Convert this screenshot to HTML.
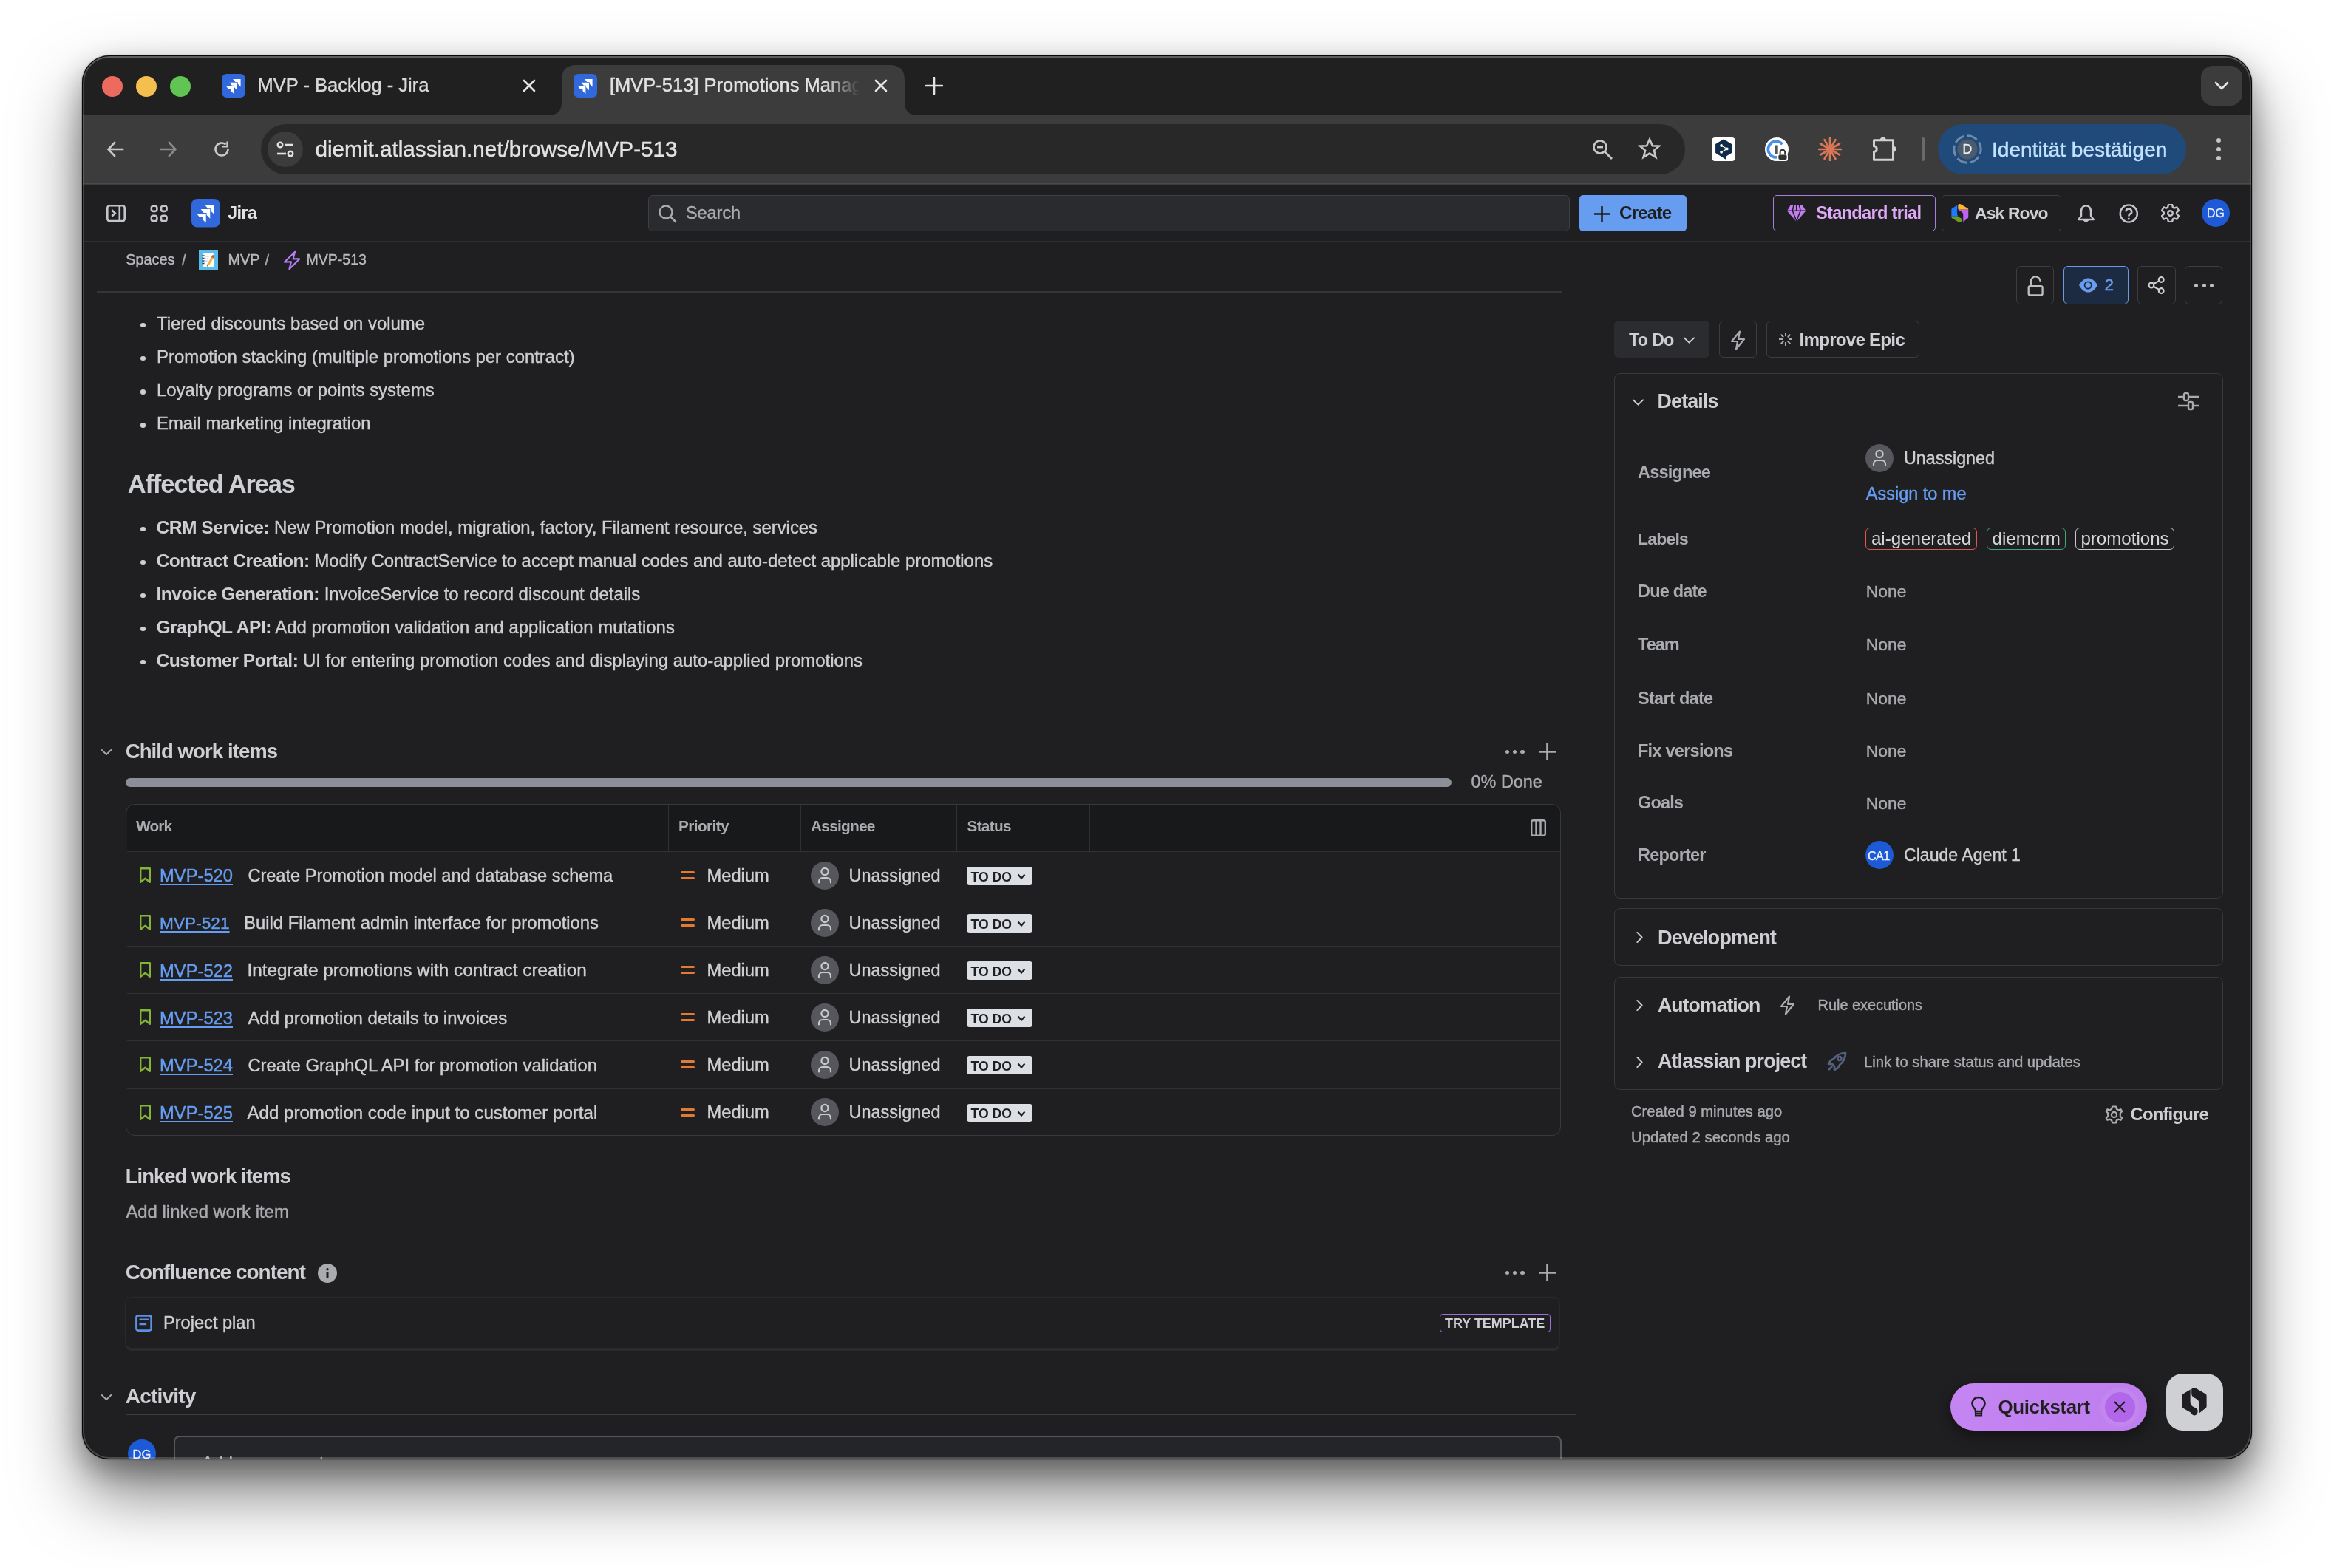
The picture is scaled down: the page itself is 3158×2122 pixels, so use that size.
<!DOCTYPE html>
<html><head><meta charset="utf-8"><style>
html,body{margin:0;padding:0;background:#fff;width:3158px;height:2122px;overflow:hidden;}
body{font-family:"Liberation Sans", sans-serif;}
#shadow{position:absolute;left:111px;top:75px;width:2936px;height:1900px;border-radius:37px;box-shadow:0 46px 90px rgba(0,0,0,0.5), 0 16px 36px rgba(0,0,0,0.3), 0 0 2px rgba(0,0,0,0.6);}
#win{position:absolute;left:111px;top:75px;width:2936px;height:1900px;border-radius:37px;overflow:hidden;background:#1F1F21;will-change:transform;}
#edge{position:absolute;left:111px;top:75px;width:2936px;height:1900px;border-radius:37px;box-shadow:inset 0 0 0 1.1px rgba(0,0,0,0.92), inset 0 0 0 3px rgba(255,255,255,0.2), inset 0 3px 0 rgba(255,255,255,0.1);pointer-events:none;}
</style></head><body>
<div id="shadow"></div>
<div id="win">
<div style="position:absolute;left:0.0px;top:0.0px;width:2936.0px;height:81.0px;background:#202020;"></div>
<div style="position:absolute;left:27.0px;top:28.0px;width:28.0px;height:28.0px;background:#EC6A5E;border-radius:50%;"></div>
<div style="position:absolute;left:73.0px;top:28.0px;width:28.0px;height:28.0px;background:#F4BF4F;border-radius:50%;"></div>
<div style="position:absolute;left:119.0px;top:28.0px;width:28.0px;height:28.0px;background:#61C554;border-radius:50%;"></div>
<svg style="position:absolute;left:189.0px;top:25.0px;" width="32" height="32" viewBox="0 0 32 32" fill="none"><rect width="32" height="32" rx="6.5" fill="#3168DC"/><path d="M15.10 6.90 h10.5 v10.5 l-3.9 -3.9 v-2.5 h-3.3 Z" fill="#fff"/><path d="M10.50 11.70 h10.5 v10.5 l-3.9 -3.9 v-2.5 h-3.3 Z" fill="#fff"/><path d="M5.90 16.60 h10.5 v10.5 l-3.9 -3.9 v-2.5 h-3.3 Z" fill="#fff"/></svg>
<div style="position:absolute;left:237.5px;top:28.4px;font-size:25.5px;line-height:25.5px;color:#D9D9D9;-webkit-text-stroke:0.4px currentColor;white-space:nowrap;">MVP - Backlog - Jira</div>
<svg style="position:absolute;left:596.0px;top:32.0px;" width="18" height="18" viewBox="0 0 18 18" fill="none"><path d="M2 2 L16 16 M16 2 L2 16" stroke="#E3E3E3" stroke-width="2.6" stroke-linecap="round"/></svg>
<svg style="position:absolute;left:631px;top:13px" width="500" height="68" viewBox="0 0 500 68"><path d="M0 68 Q18 68 18 50 L18 20 Q18 0 38 0 L462 0 Q482 0 482 20 L482 50 Q482 68 500 68 Z" fill="#3C3C3C"/></svg>
<svg style="position:absolute;left:665.0px;top:25.0px;" width="32" height="32" viewBox="0 0 32 32" fill="none"><rect width="32" height="32" rx="6.5" fill="#3168DC"/><path d="M15.10 6.90 h10.5 v10.5 l-3.9 -3.9 v-2.5 h-3.3 Z" fill="#fff"/><path d="M10.50 11.70 h10.5 v10.5 l-3.9 -3.9 v-2.5 h-3.3 Z" fill="#fff"/><path d="M5.90 16.60 h10.5 v10.5 l-3.9 -3.9 v-2.5 h-3.3 Z" fill="#fff"/></svg>
<div style="position:absolute;left:714.0px;top:28.4px;font-size:25.5px;line-height:25.5px;color:#E3E3E3;-webkit-text-stroke:0.4px currentColor;white-space:nowrap;width:340px;overflow:hidden;-webkit-mask-image:linear-gradient(90deg,#000 290px,transparent 338px);">[MVP-513] Promotions Manag</div>
<svg style="position:absolute;left:1072.0px;top:32.0px;" width="18" height="18" viewBox="0 0 18 18" fill="none"><path d="M2 2 L16 16 M16 2 L2 16" stroke="#E3E3E3" stroke-width="2.6" stroke-linecap="round"/></svg>
<svg style="position:absolute;left:1141.0px;top:29.0px;" width="24" height="24" viewBox="0 0 24 24" fill="none"><path d="M12 1 V23 M1 12 H23" stroke="#E3E3E3" stroke-width="2.6" stroke-linecap="round"/></svg>
<div style="position:absolute;left:2867.0px;top:14.0px;width:56.0px;height:54.0px;background:#3C3C3C;border-radius:16px;"></div>
<svg style="position:absolute;left:2885.0px;top:34.0px;" width="20" height="14" viewBox="0 0 20 14" fill="none"><path d="M2 3 L10 11 L18 3" stroke="#E3E3E3" stroke-width="2.6" fill="none" stroke-linecap="round" stroke-linejoin="round"/></svg>
<div style="position:absolute;left:0.0px;top:81.0px;width:2936.0px;height:93.5px;background:#3C3C3C;"></div>
<div style="position:absolute;left:0.0px;top:172.8px;width:2936.0px;height:1.7px;background:#4A4A4A;"></div>
<svg style="position:absolute;left:33.0px;top:115.0px;" width="24" height="24" viewBox="0 0 24 24" fill="none"><path d="M22 12 H3 M11 3 L2.5 12 L11 21" stroke="#C7C7C7" stroke-width="2.6" fill="none" stroke-linecap="square"/></svg>
<svg style="position:absolute;left:105.0px;top:115.0px;" width="24" height="24" viewBox="0 0 24 24" fill="none"><path d="M2 12 H21 M13 3 L21.5 12 L13 21" stroke="#8A8A8A" stroke-width="2.6" fill="none" stroke-linecap="square"/></svg>
<svg style="position:absolute;left:177.0px;top:115.0px;" width="24" height="24" viewBox="0 0 24 24" fill="none"><path d="M20.5 12 A8.5 8.5 0 1 1 17.5 5.5" stroke="#C7C7C7" stroke-width="2.6" fill="none"/><path d="M19.6 1.5 V8.2 H12.9" stroke="#C7C7C7" stroke-width="2.6" fill="none"/></svg>
<div style="position:absolute;left:241.5px;top:93.0px;width:1927.5px;height:67.8px;background:#282828;border-radius:34px;"></div>
<div style="position:absolute;left:251.0px;top:103.0px;width:48.0px;height:48.0px;background:#3C3C3C;border-radius:50%;"></div>
<svg style="position:absolute;left:261.0px;top:113.0px;" width="28" height="28" viewBox="0 0 28 28" fill="none"><circle cx="7" cy="8" r="3.3" stroke="#E3E3E3" stroke-width="2.4"/><path d="M13 8 H25" stroke="#E3E3E3" stroke-width="2.6"/><circle cx="21" cy="20" r="3.3" stroke="#E3E3E3" stroke-width="2.4"/><path d="M3 20 H15" stroke="#E3E3E3" stroke-width="2.6"/></svg>
<div style="position:absolute;left:315.5px;top:112.4px;font-size:29.7px;line-height:29.7px;color:#E3E3E3;-webkit-text-stroke:0.4px currentColor;white-space:nowrap;">diemit.atlassian.net/browse/MVP-513</div>
<svg style="position:absolute;left:2043.0px;top:113.0px;" width="30" height="30" viewBox="0 0 30 30" fill="none"><circle cx="11" cy="11" r="8.5" stroke="#C7C7C7" stroke-width="2.6"/><path d="M7 11 H15" stroke="#C7C7C7" stroke-width="2.8"/><path d="M17.5 17.5 L27 27" stroke="#C7C7C7" stroke-width="2.8"/></svg>
<svg style="position:absolute;left:2105.0px;top:111.0px;" width="32" height="31" viewBox="0 0 32 31" fill="none"><path d="M16 2.5 L19.9 11.2 L29 11.6 L21.9 17.6 L24.4 26.9 L16 21.6 L7.6 26.9 L10.1 17.6 L3 11.6 L12.1 11.2 Z" stroke="#C7C7C7" stroke-width="2.6" stroke-linejoin="miter" fill="none"/></svg>
<svg style="position:absolute;left:2205.0px;top:111.0px;" width="32" height="32" viewBox="0 0 32 32" fill="none"><rect width="32" height="32" rx="4.5" fill="#fff"/><path d="M16.3 2.3 L27 9 V21.1 L20 25.3 L19.5 30.1 L5.1 21.1 V9 Z" fill="#0F2B46"/><path d="M13.1 11 L20.8 15.4 L13.1 19.8" stroke="#fff" stroke-width="1.3" fill="none"/><circle cx="13.1" cy="11" r="1.9" fill="#fff"/><circle cx="20.8" cy="15.4" r="1.9" fill="#fff"/><circle cx="13.1" cy="19.8" r="1.9" fill="#fff"/></svg>
<svg style="position:absolute;left:2277.0px;top:111.0px;" width="32" height="32" viewBox="0 0 32 32" fill="none"><circle cx="16" cy="16" r="16" fill="#fff"/><path d="M23.5 9.2 A10.8 10.8 0 1 0 16.8 26.8" stroke="#4A8FE8" stroke-width="3.8" fill="none"/><rect x="13.9" y="10.5" width="3.8" height="11.6" fill="#555"/><rect x="17" y="22" width="14" height="10" rx="3" fill="#fff"/><rect x="18.3" y="23.4" width="11.3" height="6.7" rx="2" fill="#333"/><path d="M20.6 23.5 V20 A3.3 3.3 0 0 1 27.2 20 V23.5" stroke="#333" stroke-width="2" fill="none"/></svg>
<svg style="position:absolute;left:2349.0px;top:111.0px;" width="32" height="32" viewBox="0 0 32 32" fill="none"><path d="M16 16 L31.00 16.00" stroke="#D97757" stroke-width="2.6" stroke-linecap="round"/><path d="M16 16 L28.99 23.50" stroke="#D97757" stroke-width="2.6" stroke-linecap="round"/><path d="M16 16 L23.50 28.99" stroke="#D97757" stroke-width="2.6" stroke-linecap="round"/><path d="M16 16 L16.00 31.00" stroke="#D97757" stroke-width="2.6" stroke-linecap="round"/><path d="M16 16 L8.50 28.99" stroke="#D97757" stroke-width="2.6" stroke-linecap="round"/><path d="M16 16 L3.01 23.50" stroke="#D97757" stroke-width="2.6" stroke-linecap="round"/><path d="M16 16 L1.00 16.00" stroke="#D97757" stroke-width="2.6" stroke-linecap="round"/><path d="M16 16 L3.01 8.50" stroke="#D97757" stroke-width="2.6" stroke-linecap="round"/><path d="M16 16 L8.50 3.01" stroke="#D97757" stroke-width="2.6" stroke-linecap="round"/><path d="M16 16 L16.00 1.00" stroke="#D97757" stroke-width="2.6" stroke-linecap="round"/><path d="M16 16 L23.50 3.01" stroke="#D97757" stroke-width="2.6" stroke-linecap="round"/><path d="M16 16 L28.99 8.50" stroke="#D97757" stroke-width="2.6" stroke-linecap="round"/></svg>
<svg style="position:absolute;left:2419.0px;top:107.0px;" width="40" height="38" viewBox="0 0 40 38" fill="none"><path d="M5.5 7.8 H31.5 V34.2 H5.5 V23.4 A3.8 3.8 0 0 0 5.5 15.8 Z" stroke="#D0D0D0" stroke-width="3" fill="none" stroke-linejoin="round"/><path d="M13.6 7.8 A4.2 4.2 0 0 1 22 7.8 Z" fill="#D0D0D0"/><path d="M31.5 15.4 A4.2 4.2 0 0 1 31.5 23.8 Z" fill="#D0D0D0"/></svg>
<div style="position:absolute;left:2489.2px;top:111.0px;width:3.6px;height:32.0px;background:#6A6A6A;border-radius:2px;"></div>
<div style="position:absolute;left:2511.0px;top:93.0px;width:336.0px;height:67.8px;background:#1F4A7A;border-radius:34px;"></div>
<svg style="position:absolute;left:2530.8px;top:107.0px;" width="40" height="40" viewBox="0 0 40 40" fill="none"><circle cx="20" cy="20" r="18.2" stroke="#6F8AA8" stroke-width="3" stroke-dasharray="14.2 4.4" stroke-dashoffset="8" fill="none"/><circle cx="20" cy="20" r="13.5" fill="#4C5C6C"/></svg>
<div style="position:absolute;left:2544.5px;top:119.2px;font-size:17.5px;line-height:17.5px;color:#F0F0F0;-webkit-text-stroke:0.4px currentColor;white-space:nowrap;">D</div>
<div style="position:absolute;left:2584.0px;top:113.7px;font-size:28.1px;line-height:28.1px;color:#C2E2FF;-webkit-text-stroke:0.4px currentColor;white-space:nowrap;">Identität bestätigen</div>
<svg style="position:absolute;left:2885.0px;top:111.0px;" width="12" height="32" viewBox="0 0 12 32" fill="none"><circle cx="6" cy="4" r="3" fill="#C7C7C7"/><circle cx="6" cy="16" r="3" fill="#C7C7C7"/><circle cx="6" cy="28" r="3" fill="#C7C7C7"/></svg>
<div style="position:absolute;left:0.0px;top:174.5px;width:2936.0px;height:1725.5px;background:#1F1F21;"></div>
<div style="position:absolute;left:0.0px;top:250.5px;width:2936.0px;height:1.5px;background:#2E2F33;"></div>
<svg style="position:absolute;left:33.0px;top:202.0px;" width="26" height="24" viewBox="0 0 26 24" fill="none"><rect x="1.3" y="1.3" width="23.4" height="20.8" rx="3" stroke="#C3C5CA" stroke-width="2.6"/><path d="M17.8 1.5 V22.3" stroke="#C3C5CA" stroke-width="2.6"/><path d="M7.3 7.3 L11.8 11.5 L7.3 15.7" stroke="#C3C5CA" stroke-width="2.6" fill="none"/></svg>
<svg style="position:absolute;left:92.0px;top:202.0px;" width="24" height="24" viewBox="0 0 24 24" fill="none"><rect x="1.8" y="1.7" width="7.6" height="7.2" rx="2.6" stroke="#C3C5CA" stroke-width="2.6"/><rect x="1.8" y="14.8" width="7.6" height="7.2" rx="2.6" stroke="#C3C5CA" stroke-width="2.6"/><rect x="15" y="1.7" width="7.6" height="7.2" rx="2.6" stroke="#C3C5CA" stroke-width="2.6"/><rect x="15" y="14.8" width="7.6" height="7.2" rx="2.6" stroke="#C3C5CA" stroke-width="2.6"/></svg>
<svg style="position:absolute;left:148.0px;top:194.0px;" width="38.5" height="38.5" viewBox="0 0 32 32" fill="none"><rect width="32" height="32" rx="6.5" fill="#3168DC"/><path d="M15.10 6.90 h10.5 v10.5 l-3.9 -3.9 v-2.5 h-3.3 Z" fill="#fff"/><path d="M10.50 11.70 h10.5 v10.5 l-3.9 -3.9 v-2.5 h-3.3 Z" fill="#fff"/><path d="M5.90 16.60 h10.5 v10.5 l-3.9 -3.9 v-2.5 h-3.3 Z" fill="#fff"/></svg>
<div style="position:absolute;left:197.0px;top:201.6px;font-size:23.540000000000003px;line-height:23.540000000000003px;color:#E1E2E5;font-weight:700;letter-spacing:-0.69px;white-space:nowrap;">Jira</div>
<div style="position:absolute;left:766.0px;top:188.5px;width:1246.5px;height:49.5px;background:#2A2B2F;border:1.5px solid #3D3F44;border-radius:6px;box-sizing:border-box;"></div>
<svg style="position:absolute;left:779.0px;top:201.0px;" width="26" height="26" viewBox="0 0 26 26" fill="none"><circle cx="11" cy="11" r="8.5" stroke="#A9ABAF" stroke-width="2.4"/><path d="M17.5 17.5 L24 24" stroke="#A9ABAF" stroke-width="2.6" stroke-linecap="round"/></svg>
<div style="position:absolute;left:817.0px;top:201.7px;font-size:23.4px;line-height:23.4px;color:#A9ABAF;-webkit-text-stroke:0.4px currentColor;white-space:nowrap;">Search</div>
<div style="position:absolute;left:2026.0px;top:188.5px;width:145.0px;height:49.5px;background:#669DF1;border-radius:5px;"></div>
<svg style="position:absolute;left:2044.0px;top:202.0px;" width="25" height="25" viewBox="0 0 25 25" fill="none"><path d="M12.5 2 V23 M2 12.5 H23" stroke="#1F1F21" stroke-width="2.6"/></svg>
<div style="position:absolute;left:2080.0px;top:201.0px;font-size:24.182000000000002px;line-height:24.182000000000002px;color:#1F1F21;font-weight:700;letter-spacing:-0.82px;white-space:nowrap;">Create</div>
<div style="position:absolute;left:2287.6px;top:189.0px;width:220.4px;height:49.0px;border:1.5px solid #A67EDC;border-radius:5px;box-sizing:border-box;"></div>
<svg style="position:absolute;left:2307.0px;top:202.4px;" width="25.4" height="23" viewBox="0 0 25.4 23" fill="none"><path d="M5 0 H20.4 L25.4 8.4 L12.7 23 L0 8.4 Z" fill="#C27DF0"/><path d="M0.5 8.2 H25 M9 0.5 L7.3 8.2 L12.7 22 L18.1 8.2 L16.4 0.5 M12.7 0.5 V8" stroke="#1F1F21" stroke-width="1.5" fill="none"/></svg>
<div style="position:absolute;left:2346.0px;top:201.5px;font-size:23.647000000000002px;line-height:23.647000000000002px;color:#DDA8F5;font-weight:700;letter-spacing:-0.71px;white-space:nowrap;">Standard trial</div>
<div style="position:absolute;left:2516.0px;top:189.0px;width:162.0px;height:49.0px;border:1.5px solid #3B3D42;border-radius:5px;box-sizing:border-box;"></div>
<svg style="position:absolute;left:2529.0px;top:201.2px;" width="24" height="25" viewBox="0 0 24 25" fill="none"><defs><clipPath id="rvL"><path d="M23.7 15.5 L13.6 21.6 Q12.4 22.4 12.4 23.8 V38.3 Q12.4 39.8 13.6 40.5 L24 46.6 Q26.5 50.6 29 50.6 Q33.6 50.2 33.6 45 V43.6 Q33.4 41.6 31 40.5 L27 38.4 Q23.6 36.2 23.6 32 Z"/></clipPath><clipPath id="rvR"><path d="M25.2 15 Q26.2 12.8 28.8 13 Q30 13.2 31.5 14 L44.4 21.6 Q45.6 22.4 45.6 23.8 V38.3 Q45.6 39.8 44.4 40.5 L35.3 47.8 V33.5 Q35.3 30 32 28.2 L28 26 Q25.2 24.4 25.2 21.6 Z"/></clipPath></defs><g transform="translate(-8.3 -9) scale(0.695)"><g clip-path="url(#rvL)"><rect x="0" y="0" width="60" height="37" fill="#1D7AFC"/><rect x="0" y="37" width="60" height="30" fill="#6A9A23"/></g><g clip-path="url(#rvR)"><rect x="0" y="0" width="60" height="24" fill="#FBB634"/><rect x="0" y="24" width="60" height="40" fill="#BF63F3"/></g></g></svg>
<div style="position:absolute;left:2561.0px;top:202.1px;font-size:22.898px;line-height:22.898px;color:#CECFD2;font-weight:700;letter-spacing:-0.86px;white-space:nowrap;">Ask Rovo</div>
<svg style="position:absolute;left:2698.5px;top:200.5px;" width="25" height="26" viewBox="0 0 25 26" fill="none"><path d="M12.5 2.2 C8.2 2.2 6 5.6 6 10 V16.2 L2.2 21 H22.8 L19 16.2 V10 C19 5.6 16.8 2.2 12.5 2.2 Z" stroke="#C3C5CA" stroke-width="2.4" fill="none" stroke-linejoin="round"/><path d="M9.8 21.5 Q12.5 25.2 15.2 21.5" stroke="#C3C5CA" stroke-width="2.4" fill="none"/></svg>
<svg style="position:absolute;left:2755.5px;top:200.8px;" width="27" height="26" viewBox="0 0 27 26" fill="none"><circle cx="13.3" cy="13" r="11.6" stroke="#C3C5CA" stroke-width="2.4"/><path d="M9.6 10.3 A3.8 3.8 0 1 1 14.8 13.8 C13.7 14.4 13.3 15 13.3 16.6" stroke="#C3C5CA" stroke-width="2.6" fill="none"/><circle cx="13.3" cy="20" r="1.6" fill="#C3C5CA"/></svg>
<svg style="position:absolute;left:2813.0px;top:201.0px;" width="25" height="25" viewBox="0 0 25 25" fill="none"><path d="M9.00 4.64 L10.01 0.76 L14.99 0.76 L16.00 4.64 L17.55 5.54 L21.42 4.47 L23.91 8.79 L21.05 11.60 L21.05 13.40 L23.91 16.21 L21.42 20.53 L17.55 19.46 L16.00 20.36 L14.99 24.24 L10.01 24.24 L9.00 20.36 L7.45 19.46 L3.58 20.53 L1.09 16.21 L3.95 13.40 L3.95 11.60 L1.09 8.79 L3.58 4.47 L7.45 5.54 Z" stroke="#C3C5CA" stroke-width="2.4" fill="none" stroke-linejoin="round"/><circle cx="12.5" cy="12.5" r="3.3" stroke="#C3C5CA" stroke-width="2.4"/></svg>
<div style="position:absolute;left:2868.0px;top:194.0px;width:38.3px;height:38.3px;background:#1F5AD6;border-radius:50%;"></div>
<div style="position:absolute;left:2875.0px;top:206.2px;font-size:15.8px;line-height:15.8px;color:#E8EEFA;-webkit-text-stroke:0.4px currentColor;white-space:nowrap;">DG</div>
<div style="position:absolute;left:59.2px;top:267.0px;font-size:19.9px;line-height:19.9px;color:#B8BABE;-webkit-text-stroke:0.4px currentColor;white-space:nowrap;">Spaces</div>
<div style="position:absolute;left:135.0px;top:267.7px;font-size:19.9px;line-height:19.9px;color:#A9ABAF;-webkit-text-stroke:0.4px currentColor;white-space:nowrap;">/</div>
<svg style="position:absolute;left:158.0px;top:264.0px;" width="26" height="26" viewBox="0 0 26 26" fill="none"><rect width="26" height="26" fill="#5BBDE6"/><rect x="5.5" y="4" width="14.8" height="18" rx="1.5" fill="#fff"/><path d="M8.5 8 H14 M8.5 11 H13 M8.5 14 H12" stroke="#B8C4D0" stroke-width="0.9"/><path d="M4.5 7 H7.5 M4.5 10.5 H7.5 M4.5 14 H7.5 M4.5 17.5 H7.5" stroke="#1E3A5F" stroke-width="1.3"/><path d="M12.5 19.5 L19 8.5" stroke="#F2B53A" stroke-width="3.2"/><path d="M18.3 9.7 L20.2 6.5" stroke="#D9534F" stroke-width="3.2"/><path d="M12.2 20 L11.5 21.5" stroke="#555" stroke-width="1.5"/></svg>
<div style="position:absolute;left:197.4px;top:267.0px;font-size:19.9px;line-height:19.9px;color:#B8BABE;-webkit-text-stroke:0.4px currentColor;white-space:nowrap;">MVP</div>
<div style="position:absolute;left:247.5px;top:267.7px;font-size:19.9px;line-height:19.9px;color:#A9ABAF;-webkit-text-stroke:0.4px currentColor;white-space:nowrap;">/</div>
<svg style="position:absolute;left:273.0px;top:263.0px;" width="24" height="28" viewBox="0 0 24 28" fill="none"><path d="M15.1 2.7 L1 16.6 L10 16.2 L7.4 26.2 L21.2 12.4 L12.6 12.4 Z" stroke="#B57EF5" stroke-width="2.1" fill="none" stroke-linejoin="round"/></svg>
<div style="position:absolute;left:303.6px;top:267.3px;font-size:19.5px;line-height:19.5px;color:#B8BABE;-webkit-text-stroke:0.4px currentColor;white-space:nowrap;">MVP-513</div>
<div style="position:absolute;left:20.0px;top:319.0px;width:1982.0px;height:3.0px;background:#33353A;"></div>
<div style="position:absolute;left:79.1px;top:361.8px;width:6.6px;height:6.6px;background:#CECFD2;border-radius:50%;"></div>
<div style="position:absolute;left:101.0px;top:351.1px;font-size:23.9px;line-height:23.9px;color:#CECFD2;-webkit-text-stroke:0.4px currentColor;white-space:nowrap;">Tiered discounts based on volume</div>
<div style="position:absolute;left:79.1px;top:406.9px;width:6.6px;height:6.6px;background:#CECFD2;border-radius:50%;"></div>
<div style="position:absolute;left:101.0px;top:396.2px;font-size:23.9px;line-height:23.9px;color:#CECFD2;-webkit-text-stroke:0.4px currentColor;white-space:nowrap;">Promotion stacking (multiple promotions per contract)</div>
<div style="position:absolute;left:79.1px;top:452.0px;width:6.6px;height:6.6px;background:#CECFD2;border-radius:50%;"></div>
<div style="position:absolute;left:101.0px;top:441.3px;font-size:23.9px;line-height:23.9px;color:#CECFD2;-webkit-text-stroke:0.4px currentColor;white-space:nowrap;">Loyalty programs or points systems</div>
<div style="position:absolute;left:79.1px;top:497.1px;width:6.6px;height:6.6px;background:#CECFD2;border-radius:50%;"></div>
<div style="position:absolute;left:101.0px;top:486.4px;font-size:23.9px;line-height:23.9px;color:#CECFD2;-webkit-text-stroke:0.4px currentColor;white-space:nowrap;">Email marketing integration</div>
<div style="position:absolute;left:61.8px;top:562.8px;font-size:34.45400000000001px;line-height:34.45400000000001px;color:#CECFD2;font-weight:700;letter-spacing:-1.13px;white-space:nowrap;">Affected Areas</div>
<div style="position:absolute;left:79.1px;top:637.5px;width:6.6px;height:6.6px;background:#CECFD2;border-radius:50%;"></div>
<div style="position:absolute;left:100.4px;top:626.8px;font-size:23.9px;line-height:23.9px;color:#CECFD2;white-space:nowrap;-webkit-text-stroke:0.4px currentColor;"><b style="-webkit-text-stroke:0;letter-spacing:-0.47px;font-size:24.6px">CRM Service:</b> New Promotion model, migration, factory, Filament resource, services</div>
<div style="position:absolute;left:79.1px;top:682.5px;width:6.6px;height:6.6px;background:#CECFD2;border-radius:50%;"></div>
<div style="position:absolute;left:100.4px;top:671.8px;font-size:23.9px;line-height:23.9px;color:#CECFD2;white-space:nowrap;-webkit-text-stroke:0.4px currentColor;"><b style="-webkit-text-stroke:0;letter-spacing:-0.47px;font-size:24.6px">Contract Creation:</b> Modify ContractService to accept manual codes and auto-detect applicable promotions</div>
<div style="position:absolute;left:79.1px;top:727.5px;width:6.6px;height:6.6px;background:#CECFD2;border-radius:50%;"></div>
<div style="position:absolute;left:100.4px;top:716.8px;font-size:23.9px;line-height:23.9px;color:#CECFD2;white-space:nowrap;-webkit-text-stroke:0.4px currentColor;"><b style="-webkit-text-stroke:0;letter-spacing:-0.47px;font-size:24.6px">Invoice Generation:</b> InvoiceService to record discount details</div>
<div style="position:absolute;left:79.1px;top:772.5px;width:6.6px;height:6.6px;background:#CECFD2;border-radius:50%;"></div>
<div style="position:absolute;left:100.4px;top:761.8px;font-size:23.9px;line-height:23.9px;color:#CECFD2;white-space:nowrap;-webkit-text-stroke:0.4px currentColor;"><b style="-webkit-text-stroke:0;letter-spacing:-0.47px;font-size:24.6px">GraphQL API:</b> Add promotion validation and application mutations</div>
<div style="position:absolute;left:79.1px;top:817.5px;width:6.6px;height:6.6px;background:#CECFD2;border-radius:50%;"></div>
<div style="position:absolute;left:100.4px;top:806.8px;font-size:23.9px;line-height:23.9px;color:#CECFD2;white-space:nowrap;-webkit-text-stroke:0.4px currentColor;"><b style="-webkit-text-stroke:0;letter-spacing:-0.47px;font-size:24.6px">Customer Portal:</b> UI for entering promotion codes and displaying auto-applied promotions</div>
<svg style="position:absolute;left:24.5px;top:935.0px;" width="16" height="16" viewBox="0 0 16 16" fill="none"><path d="M1.8 5 L8 11 L14.2 5" stroke="#A9ABAF" stroke-width="1.8" fill="none" stroke-linecap="round" stroke-linejoin="round"/></svg>
<div style="position:absolute;left:58.7px;top:927.7px;font-size:27.499000000000002px;line-height:27.499000000000002px;color:#CECFD2;font-weight:700;letter-spacing:-0.90px;white-space:nowrap;">Child work items</div>
<div style="position:absolute;left:1925.9px;top:940.1px;width:5.2px;height:5.2px;background:#A9ABAF;border-radius:50%;"></div>
<div style="position:absolute;left:1936.2px;top:940.1px;width:5.2px;height:5.2px;background:#A9ABAF;border-radius:50%;"></div>
<div style="position:absolute;left:1946.4px;top:940.1px;width:5.2px;height:5.2px;background:#A9ABAF;border-radius:50%;"></div>
<svg style="position:absolute;left:1971.0px;top:931.2px;" width="23" height="23" viewBox="0 0 23 23" fill="none"><path d="M11.5 0 V23 M0 11.5 H23" stroke="#A9ABAF" stroke-width="2.6"/></svg>
<div style="position:absolute;left:58.7px;top:978.0px;width:1794.3px;height:12.0px;background:#8C8F97;border-radius:6px;"></div>
<div style="position:absolute;left:1879.6px;top:972.2px;font-size:23.4px;line-height:23.4px;color:#A9ABAF;-webkit-text-stroke:0.4px currentColor;white-space:nowrap;">0% Done</div>
<div style="position:absolute;left:59.4px;top:1013.0px;width:1941.6px;height:449.0px;border:1.4px solid #37393D;border-radius:12px;box-sizing:border-box;overflow:hidden;"></div>
<div style="position:absolute;left:60.8px;top:1014.4px;width:1938.8px;height:62.6px;background:#18191B;border-radius:11px 11px 0 0;"></div>
<div style="position:absolute;left:60.8px;top:1076.8px;width:1938.8px;height:1.3px;background:#303236;"></div>
<div style="position:absolute;left:60.8px;top:1140.9px;width:1938.8px;height:1.3px;background:#303236;"></div>
<div style="position:absolute;left:60.8px;top:1205.0px;width:1938.8px;height:1.3px;background:#303236;"></div>
<div style="position:absolute;left:60.8px;top:1269.1px;width:1938.8px;height:1.3px;background:#303236;"></div>
<div style="position:absolute;left:60.8px;top:1333.2px;width:1938.8px;height:1.3px;background:#303236;"></div>
<div style="position:absolute;left:60.8px;top:1397.3px;width:1938.8px;height:1.3px;background:#303236;"></div>
<div style="position:absolute;left:792.6px;top:1015.0px;width:1.5px;height:62.0px;background:#2E3035;"></div>
<div style="position:absolute;left:971.8px;top:1015.0px;width:1.5px;height:62.0px;background:#2E3035;"></div>
<div style="position:absolute;left:1182.7px;top:1015.0px;width:1.5px;height:62.0px;background:#2E3035;"></div>
<div style="position:absolute;left:1362.5px;top:1015.0px;width:1.5px;height:62.0px;background:#2E3035;"></div>
<div style="position:absolute;left:73.0px;top:1033.3px;font-size:20.865000000000002px;line-height:20.865000000000002px;color:#A9ABAF;font-weight:700;letter-spacing:-0.85px;white-space:nowrap;">Work</div>
<div style="position:absolute;left:807.0px;top:1033.4px;font-size:20.758px;line-height:20.758px;color:#A9ABAF;font-weight:700;letter-spacing:-0.59px;white-space:nowrap;">Priority</div>
<div style="position:absolute;left:986.0px;top:1033.3px;font-size:20.865000000000002px;line-height:20.865000000000002px;color:#A9ABAF;font-weight:700;letter-spacing:-0.76px;white-space:nowrap;">Assignee</div>
<div style="position:absolute;left:1197.5px;top:1033.4px;font-size:20.758px;line-height:20.758px;color:#A9ABAF;font-weight:700;letter-spacing:-0.69px;white-space:nowrap;">Status</div>
<svg style="position:absolute;left:1960.0px;top:1033.5px;" width="21" height="23" viewBox="0 0 21 23" fill="none"><rect x="1.2" y="1.2" width="18.6" height="20.6" rx="2.5" stroke="#A9ABAF" stroke-width="2.4"/><path d="M7.5 1.5 V21.5 M13.5 1.5 V21.5" stroke="#A9ABAF" stroke-width="2.4"/></svg>
<svg style="position:absolute;left:76.5px;top:1098.0px;" width="17" height="23" viewBox="0 0 17 23" fill="none"><path d="M2.2 2.2 H14.8 V20.8 L8.5 15.8 L2.2 20.8 Z" stroke="#82B536" stroke-width="2.4" fill="none" stroke-linejoin="round"/></svg>
<div style="position:absolute;left:105.0px;top:1098.4px;font-size:23.75px;line-height:23.7px;color:#669DF1;white-space:nowrap;-webkit-text-stroke:0.4px currentColor;text-decoration:underline;text-underline-offset:3px;text-decoration-thickness:1.5px;">MVP-520</div>
<div style="position:absolute;left:224.4px;top:1098.5px;font-size:23.57px;line-height:23.57px;color:#CECFD2;-webkit-text-stroke:0.4px currentColor;white-space:nowrap;">Create Promotion model and database schema</div>
<div style="position:absolute;left:809.6px;top:1104.0px;width:19.8px;height:3.0px;background:#E37A33;border-radius:2px;"></div>
<div style="position:absolute;left:809.6px;top:1112.0px;width:19.8px;height:3.0px;background:#E37A33;border-radius:2px;"></div>
<div style="position:absolute;left:845.6px;top:1098.5px;font-size:23.65px;line-height:23.65px;color:#CECFD2;-webkit-text-stroke:0.4px currentColor;white-space:nowrap;">Medium</div>
<svg style="position:absolute;left:986.0px;top:1090.5px;" width="38" height="38" viewBox="0 0 38 38" fill="none"><circle cx="19" cy="19" r="19" fill="#55575C"/><circle cx="19" cy="13.5" r="4.6" stroke="#C7C9CE" stroke-width="2.2" fill="none"/><path d="M11 28.5 V27 A5 5 0 0 1 16 22 H22 A5 5 0 0 1 27 27 V28.5" stroke="#C7C9CE" stroke-width="2.2" fill="none" stroke-linecap="round"/></svg>
<div style="position:absolute;left:1037.6px;top:1098.6px;font-size:23.46px;line-height:23.46px;color:#CECFD2;-webkit-text-stroke:0.4px currentColor;white-space:nowrap;">Unassigned</div>
<div style="position:absolute;left:1197.0px;top:1098.0px;width:88.7px;height:24.5px;background:#DCDFE4;border-radius:4px;"></div>
<div style="position:absolute;left:1202.5px;top:1103.6px;font-size:17.6px;line-height:17.6px;color:#1F1F21;font-weight:700;white-space:nowrap;">TO DO</div>
<svg style="position:absolute;left:1264.5px;top:1107.0px;" width="12" height="9" viewBox="0 0 12 9" fill="none"><path d="M1.5 1.5 L6 6.5 L10.5 1.5" stroke="#1F1F21" stroke-width="2.2" fill="none"/></svg>
<svg style="position:absolute;left:76.5px;top:1162.1px;" width="17" height="23" viewBox="0 0 17 23" fill="none"><path d="M2.2 2.2 H14.8 V20.8 L8.5 15.8 L2.2 20.8 Z" stroke="#82B536" stroke-width="2.4" fill="none" stroke-linejoin="round"/></svg>
<div style="position:absolute;left:105.0px;top:1162.5px;font-size:22.7px;line-height:23.7px;color:#669DF1;white-space:nowrap;-webkit-text-stroke:0.4px currentColor;text-decoration:underline;text-underline-offset:3px;text-decoration-thickness:1.5px;">MVP-521</div>
<div style="position:absolute;left:219.0px;top:1162.4px;font-size:23.86px;line-height:23.86px;color:#CECFD2;-webkit-text-stroke:0.4px currentColor;white-space:nowrap;">Build Filament admin interface for promotions</div>
<div style="position:absolute;left:809.6px;top:1168.1px;width:19.8px;height:3.0px;background:#E37A33;border-radius:2px;"></div>
<div style="position:absolute;left:809.6px;top:1176.1px;width:19.8px;height:3.0px;background:#E37A33;border-radius:2px;"></div>
<div style="position:absolute;left:845.6px;top:1162.6px;font-size:23.65px;line-height:23.65px;color:#CECFD2;-webkit-text-stroke:0.4px currentColor;white-space:nowrap;">Medium</div>
<svg style="position:absolute;left:986.0px;top:1154.6px;" width="38" height="38" viewBox="0 0 38 38" fill="none"><circle cx="19" cy="19" r="19" fill="#55575C"/><circle cx="19" cy="13.5" r="4.6" stroke="#C7C9CE" stroke-width="2.2" fill="none"/><path d="M11 28.5 V27 A5 5 0 0 1 16 22 H22 A5 5 0 0 1 27 27 V28.5" stroke="#C7C9CE" stroke-width="2.2" fill="none" stroke-linecap="round"/></svg>
<div style="position:absolute;left:1037.6px;top:1162.7px;font-size:23.46px;line-height:23.46px;color:#CECFD2;-webkit-text-stroke:0.4px currentColor;white-space:nowrap;">Unassigned</div>
<div style="position:absolute;left:1197.0px;top:1162.1px;width:88.7px;height:24.5px;background:#DCDFE4;border-radius:4px;"></div>
<div style="position:absolute;left:1202.5px;top:1167.7px;font-size:17.6px;line-height:17.6px;color:#1F1F21;font-weight:700;white-space:nowrap;">TO DO</div>
<svg style="position:absolute;left:1264.5px;top:1171.1px;" width="12" height="9" viewBox="0 0 12 9" fill="none"><path d="M1.5 1.5 L6 6.5 L10.5 1.5" stroke="#1F1F21" stroke-width="2.2" fill="none"/></svg>
<svg style="position:absolute;left:76.5px;top:1226.2px;" width="17" height="23" viewBox="0 0 17 23" fill="none"><path d="M2.2 2.2 H14.8 V20.8 L8.5 15.8 L2.2 20.8 Z" stroke="#82B536" stroke-width="2.4" fill="none" stroke-linejoin="round"/></svg>
<div style="position:absolute;left:105.0px;top:1226.6px;font-size:23.75px;line-height:23.7px;color:#669DF1;white-space:nowrap;-webkit-text-stroke:0.4px currentColor;text-decoration:underline;text-underline-offset:3px;text-decoration-thickness:1.5px;">MVP-522</div>
<div style="position:absolute;left:223.5px;top:1226.1px;font-size:24.3px;line-height:24.3px;color:#CECFD2;-webkit-text-stroke:0.4px currentColor;white-space:nowrap;">Integrate promotions with contract creation</div>
<div style="position:absolute;left:809.6px;top:1232.2px;width:19.8px;height:3.0px;background:#E37A33;border-radius:2px;"></div>
<div style="position:absolute;left:809.6px;top:1240.2px;width:19.8px;height:3.0px;background:#E37A33;border-radius:2px;"></div>
<div style="position:absolute;left:845.6px;top:1226.7px;font-size:23.65px;line-height:23.65px;color:#CECFD2;-webkit-text-stroke:0.4px currentColor;white-space:nowrap;">Medium</div>
<svg style="position:absolute;left:986.0px;top:1218.7px;" width="38" height="38" viewBox="0 0 38 38" fill="none"><circle cx="19" cy="19" r="19" fill="#55575C"/><circle cx="19" cy="13.5" r="4.6" stroke="#C7C9CE" stroke-width="2.2" fill="none"/><path d="M11 28.5 V27 A5 5 0 0 1 16 22 H22 A5 5 0 0 1 27 27 V28.5" stroke="#C7C9CE" stroke-width="2.2" fill="none" stroke-linecap="round"/></svg>
<div style="position:absolute;left:1037.6px;top:1226.8px;font-size:23.46px;line-height:23.46px;color:#CECFD2;-webkit-text-stroke:0.4px currentColor;white-space:nowrap;">Unassigned</div>
<div style="position:absolute;left:1197.0px;top:1226.2px;width:88.7px;height:24.5px;background:#DCDFE4;border-radius:4px;"></div>
<div style="position:absolute;left:1202.5px;top:1231.8px;font-size:17.6px;line-height:17.6px;color:#1F1F21;font-weight:700;white-space:nowrap;">TO DO</div>
<svg style="position:absolute;left:1264.5px;top:1235.2px;" width="12" height="9" viewBox="0 0 12 9" fill="none"><path d="M1.5 1.5 L6 6.5 L10.5 1.5" stroke="#1F1F21" stroke-width="2.2" fill="none"/></svg>
<svg style="position:absolute;left:76.5px;top:1290.3px;" width="17" height="23" viewBox="0 0 17 23" fill="none"><path d="M2.2 2.2 H14.8 V20.8 L8.5 15.8 L2.2 20.8 Z" stroke="#82B536" stroke-width="2.4" fill="none" stroke-linejoin="round"/></svg>
<div style="position:absolute;left:105.0px;top:1290.7px;font-size:23.75px;line-height:23.7px;color:#669DF1;white-space:nowrap;-webkit-text-stroke:0.4px currentColor;text-decoration:underline;text-underline-offset:3px;text-decoration-thickness:1.5px;">MVP-523</div>
<div style="position:absolute;left:224.4px;top:1290.6px;font-size:23.92px;line-height:23.92px;color:#CECFD2;-webkit-text-stroke:0.4px currentColor;white-space:nowrap;">Add promotion details to invoices</div>
<div style="position:absolute;left:809.6px;top:1296.3px;width:19.8px;height:3.0px;background:#E37A33;border-radius:2px;"></div>
<div style="position:absolute;left:809.6px;top:1304.3px;width:19.8px;height:3.0px;background:#E37A33;border-radius:2px;"></div>
<div style="position:absolute;left:845.6px;top:1290.8px;font-size:23.65px;line-height:23.65px;color:#CECFD2;-webkit-text-stroke:0.4px currentColor;white-space:nowrap;">Medium</div>
<svg style="position:absolute;left:986.0px;top:1282.8px;" width="38" height="38" viewBox="0 0 38 38" fill="none"><circle cx="19" cy="19" r="19" fill="#55575C"/><circle cx="19" cy="13.5" r="4.6" stroke="#C7C9CE" stroke-width="2.2" fill="none"/><path d="M11 28.5 V27 A5 5 0 0 1 16 22 H22 A5 5 0 0 1 27 27 V28.5" stroke="#C7C9CE" stroke-width="2.2" fill="none" stroke-linecap="round"/></svg>
<div style="position:absolute;left:1037.6px;top:1290.9px;font-size:23.46px;line-height:23.46px;color:#CECFD2;-webkit-text-stroke:0.4px currentColor;white-space:nowrap;">Unassigned</div>
<div style="position:absolute;left:1197.0px;top:1290.3px;width:88.7px;height:24.5px;background:#DCDFE4;border-radius:4px;"></div>
<div style="position:absolute;left:1202.5px;top:1295.9px;font-size:17.6px;line-height:17.6px;color:#1F1F21;font-weight:700;white-space:nowrap;">TO DO</div>
<svg style="position:absolute;left:1264.5px;top:1299.3px;" width="12" height="9" viewBox="0 0 12 9" fill="none"><path d="M1.5 1.5 L6 6.5 L10.5 1.5" stroke="#1F1F21" stroke-width="2.2" fill="none"/></svg>
<svg style="position:absolute;left:76.5px;top:1354.4px;" width="17" height="23" viewBox="0 0 17 23" fill="none"><path d="M2.2 2.2 H14.8 V20.8 L8.5 15.8 L2.2 20.8 Z" stroke="#82B536" stroke-width="2.4" fill="none" stroke-linejoin="round"/></svg>
<div style="position:absolute;left:105.0px;top:1354.8px;font-size:23.75px;line-height:23.7px;color:#669DF1;white-space:nowrap;-webkit-text-stroke:0.4px currentColor;text-decoration:underline;text-underline-offset:3px;text-decoration-thickness:1.5px;">MVP-524</div>
<div style="position:absolute;left:224.4px;top:1354.7px;font-size:23.81px;line-height:23.81px;color:#CECFD2;-webkit-text-stroke:0.4px currentColor;white-space:nowrap;">Create GraphQL API for promotion validation</div>
<div style="position:absolute;left:809.6px;top:1360.4px;width:19.8px;height:3.0px;background:#E37A33;border-radius:2px;"></div>
<div style="position:absolute;left:809.6px;top:1368.4px;width:19.8px;height:3.0px;background:#E37A33;border-radius:2px;"></div>
<div style="position:absolute;left:845.6px;top:1354.9px;font-size:23.65px;line-height:23.65px;color:#CECFD2;-webkit-text-stroke:0.4px currentColor;white-space:nowrap;">Medium</div>
<svg style="position:absolute;left:986.0px;top:1346.9px;" width="38" height="38" viewBox="0 0 38 38" fill="none"><circle cx="19" cy="19" r="19" fill="#55575C"/><circle cx="19" cy="13.5" r="4.6" stroke="#C7C9CE" stroke-width="2.2" fill="none"/><path d="M11 28.5 V27 A5 5 0 0 1 16 22 H22 A5 5 0 0 1 27 27 V28.5" stroke="#C7C9CE" stroke-width="2.2" fill="none" stroke-linecap="round"/></svg>
<div style="position:absolute;left:1037.6px;top:1355.0px;font-size:23.46px;line-height:23.46px;color:#CECFD2;-webkit-text-stroke:0.4px currentColor;white-space:nowrap;">Unassigned</div>
<div style="position:absolute;left:1197.0px;top:1354.4px;width:88.7px;height:24.5px;background:#DCDFE4;border-radius:4px;"></div>
<div style="position:absolute;left:1202.5px;top:1360.0px;font-size:17.6px;line-height:17.6px;color:#1F1F21;font-weight:700;white-space:nowrap;">TO DO</div>
<svg style="position:absolute;left:1264.5px;top:1363.4px;" width="12" height="9" viewBox="0 0 12 9" fill="none"><path d="M1.5 1.5 L6 6.5 L10.5 1.5" stroke="#1F1F21" stroke-width="2.2" fill="none"/></svg>
<svg style="position:absolute;left:76.5px;top:1418.5px;" width="17" height="23" viewBox="0 0 17 23" fill="none"><path d="M2.2 2.2 H14.8 V20.8 L8.5 15.8 L2.2 20.8 Z" stroke="#82B536" stroke-width="2.4" fill="none" stroke-linejoin="round"/></svg>
<div style="position:absolute;left:105.0px;top:1418.9px;font-size:23.75px;line-height:23.7px;color:#669DF1;white-space:nowrap;-webkit-text-stroke:0.4px currentColor;text-decoration:underline;text-underline-offset:3px;text-decoration-thickness:1.5px;">MVP-525</div>
<div style="position:absolute;left:223.5px;top:1418.6px;font-size:24.09px;line-height:24.09px;color:#CECFD2;-webkit-text-stroke:0.4px currentColor;white-space:nowrap;">Add promotion code input to customer portal</div>
<div style="position:absolute;left:809.6px;top:1424.5px;width:19.8px;height:3.0px;background:#E37A33;border-radius:2px;"></div>
<div style="position:absolute;left:809.6px;top:1432.5px;width:19.8px;height:3.0px;background:#E37A33;border-radius:2px;"></div>
<div style="position:absolute;left:845.6px;top:1419.0px;font-size:23.65px;line-height:23.65px;color:#CECFD2;-webkit-text-stroke:0.4px currentColor;white-space:nowrap;">Medium</div>
<svg style="position:absolute;left:986.0px;top:1411.0px;" width="38" height="38" viewBox="0 0 38 38" fill="none"><circle cx="19" cy="19" r="19" fill="#55575C"/><circle cx="19" cy="13.5" r="4.6" stroke="#C7C9CE" stroke-width="2.2" fill="none"/><path d="M11 28.5 V27 A5 5 0 0 1 16 22 H22 A5 5 0 0 1 27 27 V28.5" stroke="#C7C9CE" stroke-width="2.2" fill="none" stroke-linecap="round"/></svg>
<div style="position:absolute;left:1037.6px;top:1419.1px;font-size:23.46px;line-height:23.46px;color:#CECFD2;-webkit-text-stroke:0.4px currentColor;white-space:nowrap;">Unassigned</div>
<div style="position:absolute;left:1197.0px;top:1418.5px;width:88.7px;height:24.5px;background:#DCDFE4;border-radius:4px;"></div>
<div style="position:absolute;left:1202.5px;top:1424.1px;font-size:17.6px;line-height:17.6px;color:#1F1F21;font-weight:700;white-space:nowrap;">TO DO</div>
<svg style="position:absolute;left:1264.5px;top:1427.5px;" width="12" height="9" viewBox="0 0 12 9" fill="none"><path d="M1.5 1.5 L6 6.5 L10.5 1.5" stroke="#1F1F21" stroke-width="2.2" fill="none"/></svg>
<div style="position:absolute;left:58.7px;top:1502.5px;font-size:27.392000000000003px;line-height:27.392000000000003px;color:#CECFD2;font-weight:700;letter-spacing:-0.92px;white-space:nowrap;">Linked work items</div>
<div style="position:absolute;left:59.4px;top:1552.8px;font-size:23.9px;line-height:23.9px;color:#A9ABAF;-webkit-text-stroke:0.4px currentColor;white-space:nowrap;">Add linked work item</div>
<div style="position:absolute;left:58.7px;top:1633.4px;font-size:27.927000000000003px;line-height:27.927000000000003px;color:#CECFD2;font-weight:700;letter-spacing:-0.95px;white-space:nowrap;">Confluence content</div>
<svg style="position:absolute;left:319.0px;top:1634.7px;" width="26" height="26" viewBox="0 0 26 26" fill="none"><circle cx="13" cy="13" r="13" fill="#A9ABAF"/><circle cx="13" cy="7.8" r="1.8" fill="#1F1F21"/><path d="M13 11.5 V19.5" stroke="#1F1F21" stroke-width="3"/></svg>
<div style="position:absolute;left:1925.9px;top:1644.9px;width:5.2px;height:5.2px;background:#A9ABAF;border-radius:50%;"></div>
<div style="position:absolute;left:1936.2px;top:1644.9px;width:5.2px;height:5.2px;background:#A9ABAF;border-radius:50%;"></div>
<div style="position:absolute;left:1946.4px;top:1644.9px;width:5.2px;height:5.2px;background:#A9ABAF;border-radius:50%;"></div>
<svg style="position:absolute;left:1971.0px;top:1636.0px;" width="23" height="23" viewBox="0 0 23 23" fill="none"><path d="M11.5 0 V23 M0 11.5 H23" stroke="#A9ABAF" stroke-width="2.6"/></svg>
<div style="position:absolute;left:59.4px;top:1680.5px;width:1939.6px;height:68.0px;background:#1F1F21;border-radius:8px;box-shadow:0 4px 0 #2A2B2F, 0 0 0 1.2px #27282C;"></div>
<svg style="position:absolute;left:72.0px;top:1704.0px;" width="23" height="23" viewBox="0 0 23 23" fill="none"><rect x="1.4" y="1.4" width="20.2" height="20.2" rx="2.8" stroke="#5E8FE6" stroke-width="2.6"/><path d="M5.5 6.6 H18.4 M5.5 13 H15.2" stroke="#5E8FE6" stroke-width="2.4"/></svg>
<div style="position:absolute;left:110.0px;top:1704.0px;font-size:23.6px;line-height:23.6px;color:#CECFD2;-webkit-text-stroke:0.4px currentColor;white-space:nowrap;">Project plan</div>
<div style="position:absolute;left:1837.0px;top:1703.3px;width:150.0px;height:24.7px;border:1.5px solid #9D6FDB;border-radius:4px;box-sizing:border-box;"></div>
<div style="position:absolute;left:1844.0px;top:1707.8px;font-size:17.97px;line-height:17.97px;color:#CECFD2;font-weight:700;white-space:nowrap;">TRY TEMPLATE</div>
<svg style="position:absolute;left:24.5px;top:1807.8px;" width="16" height="16" viewBox="0 0 16 16" fill="none"><path d="M1.8 5 L8 11 L14.2 5" stroke="#A9ABAF" stroke-width="1.8" fill="none" stroke-linecap="round" stroke-linejoin="round"/></svg>
<div style="position:absolute;left:58.7px;top:1800.6px;font-size:28.141000000000002px;line-height:28.141000000000002px;color:#CECFD2;font-weight:700;letter-spacing:-0.83px;white-space:nowrap;">Activity</div>
<div style="position:absolute;left:58.7px;top:1837.5px;width:1963.3px;height:2.5px;background:#3B3D42;"></div>
<div style="position:absolute;left:62.0px;top:1873.0px;width:38.0px;height:38.0px;background:#1D5BD6;border-radius:50%;"></div>
<div style="position:absolute;left:68.5px;top:1885.0px;font-size:16.5px;line-height:16.5px;color:#E8EEFA;-webkit-text-stroke:0.4px currentColor;white-space:nowrap;">DG</div>
<div style="position:absolute;left:124.0px;top:1868.0px;width:1878.0px;height:67.0px;background:#242528;border:2px solid #55575C;border-radius:8px;box-sizing:border-box;"></div>
<div style="position:absolute;left:162.0px;top:1894.0px;font-size:23.6px;line-height:23.6px;color:#A9ABAF;-webkit-text-stroke:0.4px currentColor;white-space:nowrap;">Add a comment…</div>
<div style="position:absolute;left:2617.4px;top:285.3px;width:50.9px;height:51.5px;border:1.5px solid #3B3D42;border-radius:6px;box-sizing:border-box;"></div>
<svg style="position:absolute;left:2631.0px;top:297.0px;" width="24" height="30" viewBox="0 0 24 30" fill="none"><rect x="2.7" y="15.2" width="18.9" height="12.3" rx="2.2" stroke="#BDBFC3" stroke-width="2.3"/><path d="M5.8 15.2 V8.5 A6.3 6.3 0 0 1 18.5 8.9" stroke="#BDBFC3" stroke-width="2.3" fill="none"/></svg>
<div style="position:absolute;left:2681.0px;top:285.3px;width:87.6px;height:51.5px;background:#1C2B42;border:1.5px solid #6A98E8;border-radius:6px;box-sizing:border-box;"></div>
<svg style="position:absolute;left:2700.5px;top:301.0px;" width="27" height="20" viewBox="0 0 27 20" fill="none"><path d="M1 10 C5 3 9 0.5 13.5 0.5 C18 0.5 22 3 26 10 C22 17 18 19.5 13.5 19.5 C9 19.5 5 17 1 10 Z" fill="#6A9CF0"/><circle cx="13.2" cy="10" r="4.6" fill="none" stroke="#1C2B42" stroke-width="1.8"/><circle cx="13.2" cy="10" r="2.6" fill="#6A9CF0"/></svg>
<div style="position:absolute;left:2736.5px;top:300.4px;font-size:22.5px;line-height:22.5px;color:#6A9CF0;-webkit-text-stroke:0.4px currentColor;white-space:nowrap;">2</div>
<div style="position:absolute;left:2781.0px;top:285.3px;width:51.6px;height:51.5px;border:1.5px solid #3B3D42;border-radius:6px;box-sizing:border-box;"></div>
<svg style="position:absolute;left:2793.0px;top:296.0px;" width="28" height="30" viewBox="0 0 28 30" fill="none"><circle cx="20.2" cy="7.4" r="3.4" stroke="#CECFD2" stroke-width="2.2"/><circle cx="6.9" cy="15" r="3.4" stroke="#CECFD2" stroke-width="2.2"/><circle cx="20.2" cy="22.6" r="3.4" stroke="#CECFD2" stroke-width="2.2"/><path d="M9.9 13.3 L17.2 9.1 M9.9 16.7 L17.2 20.9" stroke="#CECFD2" stroke-width="2.2"/></svg>
<div style="position:absolute;left:2845.0px;top:285.3px;width:51.0px;height:51.5px;border:1.5px solid #3B3D42;border-radius:6px;box-sizing:border-box;"></div>
<div style="position:absolute;left:2858.1px;top:308.5px;width:5.0px;height:5.0px;background:#BDBFC3;border-radius:50%;"></div>
<div style="position:absolute;left:2868.5px;top:308.5px;width:5.0px;height:5.0px;background:#BDBFC3;border-radius:50%;"></div>
<div style="position:absolute;left:2878.9px;top:308.5px;width:5.0px;height:5.0px;background:#BDBFC3;border-radius:50%;"></div>
<div style="position:absolute;left:2073.0px;top:359.0px;width:128.7px;height:50.4px;background:#2B2C2F;border-radius:6px;"></div>
<div style="position:absolute;left:2093.0px;top:373.6px;font-size:23.4865px;line-height:23.4865px;color:#CECFD2;font-weight:700;letter-spacing:-0.85px;white-space:nowrap;">To Do</div>
<svg style="position:absolute;left:2165.5px;top:376.5px;" width="17" height="17" viewBox="0 0 16 16" fill="none"><path d="M1.8 5 L8 11 L14.2 5" stroke="#CECFD2" stroke-width="1.8" fill="none" stroke-linecap="round" stroke-linejoin="round"/></svg>
<div style="position:absolute;left:2215.0px;top:359.0px;width:50.7px;height:50.4px;border:1.5px solid #3B3D42;border-radius:6px;box-sizing:border-box;"></div>
<svg style="position:absolute;left:2230.0px;top:372.0px;" width="21" height="27" viewBox="0 0 21 27" fill="none"><path d="M13 1.5 L2 15 H10 L8 25.5 L19 12 H11 Z" stroke="#A9ABAF" stroke-width="2.2" fill="none" stroke-linejoin="round"/></svg>
<div style="position:absolute;left:2279.0px;top:359.0px;width:206.5px;height:50.4px;border:1.5px solid #3B3D42;border-radius:6px;box-sizing:border-box;"></div>
<svg style="position:absolute;left:2295.0px;top:374.0px;" width="20" height="20" viewBox="0 0 20 20" fill="none"><path d="M14.00 10.00 L19.00 10.00" stroke="#A9ABAF" stroke-width="2"/><path d="M12.83 12.83 L16.36 16.36" stroke="#A9ABAF" stroke-width="2"/><path d="M10.00 14.00 L10.00 19.00" stroke="#A9ABAF" stroke-width="2"/><path d="M7.17 12.83 L3.64 16.36" stroke="#A9ABAF" stroke-width="2"/><path d="M6.00 10.00 L1.00 10.00" stroke="#A9ABAF" stroke-width="2"/><path d="M7.17 7.17 L3.64 3.64" stroke="#A9ABAF" stroke-width="2"/><path d="M10.00 6.00 L10.00 1.00" stroke="#A9ABAF" stroke-width="2"/><path d="M12.83 7.17 L16.36 3.64" stroke="#A9ABAF" stroke-width="2"/></svg>
<div style="position:absolute;left:2323.6px;top:373.0px;font-size:24.2462px;line-height:24.2462px;color:#CECFD2;font-weight:700;letter-spacing:-0.83px;white-space:nowrap;">Improve Epic</div>
<div style="position:absolute;left:2073.0px;top:429.7px;width:823.7px;height:711.1px;border:1.4px solid #36383C;border-radius:8px;box-sizing:border-box;"></div>
<svg style="position:absolute;left:2097.0px;top:460.9px;" width="17" height="17" viewBox="0 0 16 16" fill="none"><path d="M1.8 5 L8 11 L14.2 5" stroke="#CECFD2" stroke-width="1.8" fill="none" stroke-linecap="round" stroke-linejoin="round"/></svg>
<div style="position:absolute;left:2131.5px;top:455.3px;font-size:26.824900000000003px;line-height:26.824900000000003px;color:#CECFD2;font-weight:700;letter-spacing:-0.82px;white-space:nowrap;">Details</div>
<svg style="position:absolute;left:2835.0px;top:455.0px;" width="30" height="26" viewBox="0 0 30 26" fill="none"><path d="M1 7 H29 M1 19 H29" stroke="#A9ABAF" stroke-width="2.4"/><rect x="9" y="2" width="6" height="10" rx="2" fill="#1F1F21" stroke="#A9ABAF" stroke-width="2.4"/><rect x="15" y="14" width="6" height="10" rx="2" fill="#1F1F21" stroke="#A9ABAF" stroke-width="2.4"/></svg>
<div style="position:absolute;left:2105.0px;top:553.4px;font-size:23.5828px;line-height:23.5828px;color:#A9ABAF;font-weight:700;letter-spacing:-0.86px;white-space:nowrap;">Assignee</div>
<svg style="position:absolute;left:2413.0px;top:526.3px;" width="38" height="38" viewBox="0 0 38 38" fill="none"><circle cx="19" cy="19" r="19" fill="#55575C"/><circle cx="19" cy="13.5" r="4.6" stroke="#C7C9CE" stroke-width="2.2" fill="none"/><path d="M11 28.5 V27 A5 5 0 0 1 16 22 H22 A5 5 0 0 1 27 27 V28.5" stroke="#C7C9CE" stroke-width="2.2" fill="none" stroke-linecap="round"/></svg>
<div style="position:absolute;left:2465.0px;top:533.9px;font-size:23.29px;line-height:23.29px;color:#CECFD2;-webkit-text-stroke:0.4px currentColor;white-space:nowrap;">Unassigned</div>
<div style="position:absolute;left:2413.8px;top:581.6px;font-size:23.48px;line-height:23.48px;color:#669DF1;-webkit-text-stroke:0.4px currentColor;white-space:nowrap;">Assign to me</div>
<div style="position:absolute;left:2105.0px;top:642.9px;font-size:22.962200000000003px;line-height:22.962200000000003px;color:#A9ABAF;font-weight:700;letter-spacing:-0.79px;white-space:nowrap;">Labels</div>
<div style="position:absolute;left:2413.4px;top:638.9px;width:150.4px;height:30.6px;border:1.5px solid #E2574C;border-radius:6px;box-sizing:border-box;"></div>
<div style="position:absolute;left:2413.4px;top:642.1px;width:150.4px;text-align:center;font-size:24.1px;line-height:24.1px;color:#D5D6D9;white-space:nowrap;">ai-generated</div>
<div style="position:absolute;left:2577.0px;top:638.9px;width:107.4px;height:30.6px;border:1.5px solid #3FA878;border-radius:6px;box-sizing:border-box;"></div>
<div style="position:absolute;left:2577.0px;top:642.1px;width:107.4px;text-align:center;font-size:24.1px;line-height:24.1px;color:#D5D6D9;white-space:nowrap;">diemcrm</div>
<div style="position:absolute;left:2697.0px;top:638.9px;width:134.0px;height:30.6px;border:1.5px solid #C7C9CE;border-radius:6px;box-sizing:border-box;"></div>
<div style="position:absolute;left:2697.0px;top:642.1px;width:134.0px;text-align:center;font-size:24.1px;line-height:24.1px;color:#D5D6D9;white-space:nowrap;">promotions</div>
<div style="position:absolute;left:2105.0px;top:713.6px;font-size:23.540000000000003px;line-height:23.540000000000003px;color:#A9ABAF;font-weight:700;letter-spacing:-0.81px;white-space:nowrap;">Due date</div>
<div style="position:absolute;left:2413.8px;top:714.1px;font-size:22.88px;line-height:22.88px;color:#A9ABAF;-webkit-text-stroke:0.4px currentColor;white-space:nowrap;">None</div>
<div style="position:absolute;left:2105.0px;top:785.6px;font-size:23.540000000000003px;line-height:23.540000000000003px;color:#A9ABAF;font-weight:700;letter-spacing:-0.98px;white-space:nowrap;">Team</div>
<div style="position:absolute;left:2413.8px;top:786.1px;font-size:22.88px;line-height:22.88px;color:#A9ABAF;-webkit-text-stroke:0.4px currentColor;white-space:nowrap;">None</div>
<div style="position:absolute;left:2105.0px;top:858.9px;font-size:23.540000000000003px;line-height:23.540000000000003px;color:#A9ABAF;font-weight:700;letter-spacing:-0.71px;white-space:nowrap;">Start date</div>
<div style="position:absolute;left:2413.8px;top:859.4px;font-size:22.88px;line-height:22.88px;color:#A9ABAF;-webkit-text-stroke:0.4px currentColor;white-space:nowrap;">None</div>
<div style="position:absolute;left:2105.0px;top:929.8px;font-size:23.540000000000003px;line-height:23.540000000000003px;color:#A9ABAF;font-weight:700;letter-spacing:-0.75px;white-space:nowrap;">Fix versions</div>
<div style="position:absolute;left:2413.8px;top:930.3px;font-size:22.88px;line-height:22.88px;color:#A9ABAF;-webkit-text-stroke:0.4px currentColor;white-space:nowrap;">None</div>
<div style="position:absolute;left:2105.0px;top:1000.0px;font-size:23.540000000000003px;line-height:23.540000000000003px;color:#A9ABAF;font-weight:700;letter-spacing:-0.86px;white-space:nowrap;">Goals</div>
<div style="position:absolute;left:2413.8px;top:1000.5px;font-size:22.88px;line-height:22.88px;color:#A9ABAF;-webkit-text-stroke:0.4px currentColor;white-space:nowrap;">None</div>
<div style="position:absolute;left:2105.0px;top:1071.1px;font-size:23.540000000000003px;line-height:23.540000000000003px;color:#A9ABAF;font-weight:700;letter-spacing:-0.80px;white-space:nowrap;">Reporter</div>
<div style="position:absolute;left:2413.0px;top:1063.0px;width:38.0px;height:38.0px;background:#1D5BD6;border-radius:50%;"></div>
<div style="position:absolute;left:2416.0px;top:1075.1px;font-size:16.2px;line-height:16.2px;color:#F0F4FF;-webkit-text-stroke:0.4px currentColor;white-space:nowrap;letter-spacing:-0.6px;">CA1</div>
<div style="position:absolute;left:2465.0px;top:1071.4px;font-size:23.1px;line-height:23.1px;color:#CECFD2;-webkit-text-stroke:0.4px currentColor;white-space:nowrap;">Claude Agent 1</div>
<div style="position:absolute;left:2073.0px;top:1154.3px;width:823.7px;height:77.7px;border:1.4px solid #36383C;border-radius:8px;box-sizing:border-box;"></div>
<svg style="position:absolute;left:2098.5px;top:1184.5px;" width="17" height="17" viewBox="0 0 16 16" fill="none"><path d="M5 1.8 L11 8 L5 14.2" stroke="#CECFD2" stroke-width="1.8" fill="none" stroke-linecap="round" stroke-linejoin="round"/></svg>
<div style="position:absolute;left:2132.0px;top:1179.5px;font-size:27.2636px;line-height:27.2636px;color:#CECFD2;font-weight:700;letter-spacing:-1.02px;white-space:nowrap;">Development</div>
<div style="position:absolute;left:2073.0px;top:1247.0px;width:823.7px;height:153.0px;border:1.4px solid #36383C;border-radius:8px;box-sizing:border-box;"></div>
<svg style="position:absolute;left:2098.5px;top:1276.5px;" width="17" height="17" viewBox="0 0 16 16" fill="none"><path d="M5 1.8 L11 8 L5 14.2" stroke="#CECFD2" stroke-width="1.8" fill="none" stroke-linecap="round" stroke-linejoin="round"/></svg>
<div style="position:absolute;left:2132.0px;top:1271.8px;font-size:26.6751px;line-height:26.6751px;color:#CECFD2;font-weight:700;letter-spacing:-0.97px;white-space:nowrap;">Automation</div>
<svg style="position:absolute;left:2297.0px;top:1272.0px;" width="21" height="27" viewBox="0 0 21 27" fill="none"><path d="M13 1.5 L2 15 H10 L8 25.5 L19 12 H11 Z" stroke="#A9ABAF" stroke-width="2.2" fill="none" stroke-linejoin="round"/></svg>
<div style="position:absolute;left:2348.6px;top:1275.8px;font-size:19.87px;line-height:19.87px;color:#A9ABAF;-webkit-text-stroke:0.4px currentColor;white-space:nowrap;">Rule executions</div>
<svg style="position:absolute;left:2098.5px;top:1353.5px;" width="17" height="17" viewBox="0 0 16 16" fill="none"><path d="M5 1.8 L11 8 L5 14.2" stroke="#CECFD2" stroke-width="1.8" fill="none" stroke-linecap="round" stroke-linejoin="round"/></svg>
<div style="position:absolute;left:2132.0px;top:1348.3px;font-size:26.760700000000003px;line-height:26.760700000000003px;color:#CECFD2;font-weight:700;letter-spacing:-0.83px;white-space:nowrap;">Atlassian project</div>
<svg style="position:absolute;left:2360.0px;top:1348.0px;" width="28" height="28" viewBox="0 0 28 28" fill="none"><path d="M26 2 Q16 2 10 10 L6 12 L3 17 L8 17 L11 20 L11 25 L16 22 L18 18 Q26 12 26 2 Z" stroke="#56627D" stroke-width="2.7" fill="none" stroke-linejoin="round"/><circle cx="18" cy="9.5" r="2.5" stroke="#56627D" stroke-width="2.4"/><path d="M3 25 L8 20" stroke="#56627D" stroke-width="2.7"/></svg>
<div style="position:absolute;left:2411.0px;top:1351.8px;font-size:20.27px;line-height:20.27px;color:#A9ABAF;-webkit-text-stroke:0.4px currentColor;white-space:nowrap;">Link to share status and updates</div>
<div style="position:absolute;left:2096.0px;top:1418.7px;font-size:20.2px;line-height:20.2px;color:#A9ABAF;-webkit-text-stroke:0.4px currentColor;white-space:nowrap;">Created 9 minutes ago</div>
<div style="position:absolute;left:2096.0px;top:1453.5px;font-size:20.35px;line-height:20.35px;color:#A9ABAF;-webkit-text-stroke:0.4px currentColor;white-space:nowrap;">Updated 2 seconds ago</div>
<svg style="position:absolute;left:2736.6px;top:1420.5px;" width="25" height="25" viewBox="0 0 25 25" fill="none"><path d="M12.5 1.5 L15 1.5 L15.8 4.8 L18.4 6.3 L21.6 5.2 L23.3 8 L20.8 10.4 V14.6 L23.3 17 L21.6 19.8 L18.4 18.7 L15.8 20.2 L15 23.5 H10 L9.2 20.2 L6.6 18.7 L3.4 19.8 L1.7 17 L4.2 14.6 V10.4 L1.7 8 L3.4 5.2 L6.6 6.3 L9.2 4.8 L10 1.5 Z" stroke="#A9ABAF" stroke-width="2.2" fill="none" stroke-linejoin="round"/><circle cx="12.5" cy="12.5" r="3.6" stroke="#A9ABAF" stroke-width="2.2"/></svg>
<div style="position:absolute;left:2771.5px;top:1420.6px;font-size:23.9038px;line-height:23.9038px;color:#CECFD2;font-weight:700;letter-spacing:-0.82px;white-space:nowrap;">Configure</div>
<div style="position:absolute;left:2528.0px;top:1797.0px;width:266.0px;height:64.0px;background:linear-gradient(90deg,#C484F2,#BE7EEE);border-radius:32px;box-shadow:0 6px 18px rgba(0,0,0,0.45);"></div>
<svg style="position:absolute;left:2555.0px;top:1814.0px;" width="22" height="30" viewBox="0 0 22 30" fill="none"><path d="M11 2 A8.5 8.5 0 0 0 5 16.5 Q7 18.5 7 21 H15 Q15 18.5 17 16.5 A8.5 8.5 0 0 0 11 2 Z" stroke="#1F1F21" stroke-width="2.4" fill="none"/><path d="M7 21 V26.5 H15 V21 M7 23.8 H15" stroke="#1F1F21" stroke-width="2.2" fill="none"/></svg>
<div style="position:absolute;left:2592.5px;top:1817.1px;font-size:25.8839px;line-height:25.8839px;color:#1F1F21;font-weight:700;letter-spacing:-0.37px;white-space:nowrap;">Quickstart</div>
<div style="position:absolute;left:2736.5px;top:1808.5px;width:41.0px;height:41.0px;background:#B266E9;border-radius:50%;box-shadow:0 0 0 6px rgba(255,255,255,0.06);"></div>
<svg style="position:absolute;left:2748.0px;top:1820.0px;" width="18" height="18" viewBox="0 0 18 18" fill="none"><path d="M2 2 L16 16 M16 2 L2 16" stroke="#1F1F21" stroke-width="2.2"/></svg>
<div style="position:absolute;left:2820.0px;top:1784.0px;width:77.0px;height:77.0px;background:#CFD0D4;border-radius:22px;"></div>
<svg style="position:absolute;left:2829.0px;top:1790.0px;" width="60" height="65" viewBox="0 0 60 65" fill="none"><path d="M23.7 15.5 L13.6 21.6 Q12.4 22.4 12.4 23.8 V38.3 Q12.4 39.8 13.6 40.5 L24 46.6 Q26.5 50.6 29 50.6 Q33.6 50.2 33.6 45 V43.6 Q33.4 41.6 31 40.5 L27 38.4 Q23.6 36.2 23.6 32 Z" fill="#1F1F21"/><path d="M25.2 15 Q26.2 12.8 28.8 13 Q30 13.2 31.5 14 L44.4 21.6 Q45.6 22.4 45.6 23.8 V38.3 Q45.6 39.8 44.4 40.5 L35.3 47.8 V33.5 Q35.3 30 32 28.2 L28 26 Q25.2 24.4 25.2 21.6 Z" fill="#1F1F21"/></svg>
</div>
<div id="edge"></div>
</body></html>
